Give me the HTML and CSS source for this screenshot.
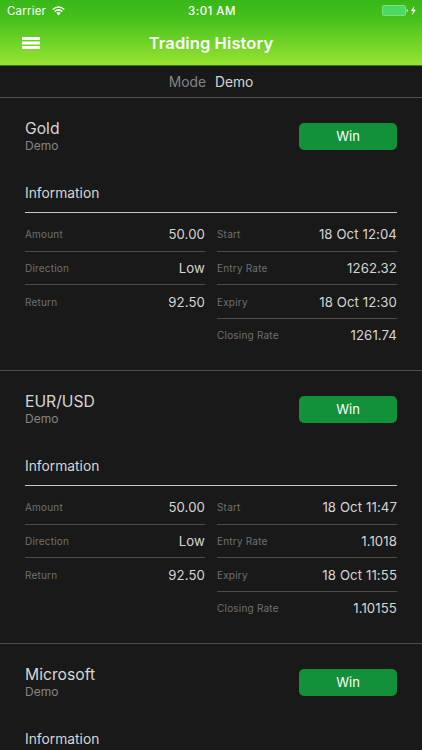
FILE: index.html
```html
<!DOCTYPE html>
<html lang="en">
<head>
<meta charset="utf-8">
<title>Trading History</title>
<link rel="stylesheet" href="styles.css">
</head>
<body>
<header class="header">
  <div class="status">
    <div class="carrier"><span>Carrier</span>
      <svg class="wifi" width="13" height="10" viewBox="0 0 13 10" fill="none" stroke="#fff" stroke-width="1.5"><path d="M.7 3.5Q6.5-1.6 12.3 3.5M2.7 5.5Q6.5 2.2 10.3 5.5"/><path d="M4.3 7Q6.5 5.2 8.7 7L6.5 9.4Z" fill="#fff" stroke="none"/></svg>
    </div>
    <div class="time">3:01 AM</div>
    <svg class="battery" width="35" height="12" viewBox="0 0 35 12"><rect x=".5" y=".5" width="23" height="10" rx="1.5" fill="#4cd964" stroke="#83dc78"/><path d="M24.5 3.7Q26 4.2 26 5.5T24.5 7.4Z" fill="#b8efa8"/><path d="M32.3 1L28.8 6.1H31L29.8 10.2L34 4.7H31.5Z" fill="#fff"/></svg>
  </div>
  <div class="nav">
    <svg class="menu" width="18" height="12" viewBox="0 0 18 12" fill="#fff"><path d="M0 0H18V3H0ZM0 4.5H18V7.5H0ZM0 9H18V12H0Z"/></svg>
    <h1>Trading History</h1>
  </div>
</header>
<div class="mode"><span class="mode-label">Mode</span><span>Demo</span></div>
<main>
  <section class="trade">
    <div class="trade-head"><div><h2>Gold</h2><p>Demo</p></div><div class="result">Win</div></div>
    <h3>Information</h3>
    <div class="columns">
      <dl><div><dt>Amount</dt><dd>50.00</dd></div><div><dt>Direction</dt><dd>Low</dd></div><div><dt>Return</dt><dd>92.50</dd></div></dl>
      <dl><div><dt>Start</dt><dd>18 Oct 12:04</dd></div><div><dt>Entry Rate</dt><dd>1262.32</dd></div><div><dt>Expiry</dt><dd>18 Oct 12:30</dd></div><div><dt>Closing Rate</dt><dd>1261.74</dd></div></dl>
    </div>
  </section>
  <section class="trade">
    <div class="trade-head"><div><h2>EUR/USD</h2><p>Demo</p></div><div class="result">Win</div></div>
    <h3>Information</h3>
    <div class="columns">
      <dl><div><dt>Amount</dt><dd>50.00</dd></div><div><dt>Direction</dt><dd>Low</dd></div><div><dt>Return</dt><dd>92.50</dd></div></dl>
      <dl><div><dt>Start</dt><dd>18 Oct 11:47</dd></div><div><dt>Entry Rate</dt><dd>1.1018</dd></div><div><dt>Expiry</dt><dd>18 Oct 11:55</dd></div><div><dt>Closing Rate</dt><dd>1.10155</dd></div></dl>
    </div>
  </section>
  <section class="trade partial">
    <div class="trade-head"><div><h2>Microsoft</h2><p>Demo</p></div><div class="result">Win</div></div>
    <h3>Information</h3>
  </section>
</main>
</body>
</html>
```
FILE: styles.css
```css
* { box-sizing: border-box; margin: 0; padding: 0; }
body {
  height: 750px;
  display: flex;
  flex-direction: column;
  overflow: hidden;
  background: #191919;
  color: #d6d6d6;
  font-family: Inter, "Liberation Sans", sans-serif;
}
.header {
  flex: none;
  height: 66px;
  color: #fff;
  background: linear-gradient(#38b818, #45c01c 28%, #98e432);
  border-bottom: 1px solid #43751f;
}
.status {
  height: 22px;
  padding: 0 5px 0 7px;
  display: grid;
  grid-template-columns: 1fr auto 1fr;
  align-items: center;
  font-size: 11.5px;
  line-height: 22px;
}
.carrier { display: flex; align-items: center; gap: 6px; letter-spacing: .2px; }
.time { font-weight: 500; letter-spacing: .45px; }
.battery { justify-self: end; }
.nav {
  height: 42px;
  display: grid;
  grid-template-columns: 40px 1fr 40px;
  align-items: center;
  padding: 0 22px;
}
h1 { text-align: center; font-size: 16.5px; font-weight: 600; line-height: 22px; letter-spacing: .1px; white-space: nowrap; }
.mode {
  flex: none;
  height: 32px;
  display: flex;
  justify-content: center;
  gap: 9px;
  border-bottom: 1px solid #4c4c4c;
  font-size: 13.8px;
  line-height: 32px;
}
.mode-label { color: #858585; }
.trade { height: 273px; padding: 20px 25px 0; border-bottom: 1px solid #4c4c4c; }
.trade-head { height: 60px; display: flex; justify-content: space-between; }
h2 { font-size: 15.7px; font-weight: 400; line-height: 22px; }
p { font-size: 12px; line-height: 12px; color: #858585; }
.result {
  width: 98px;
  height: 27px;
  margin-top: 5px;
  border-radius: 5px;
  background: #12903a;
  color: #fff;
  font-size: 13px;
  line-height: 27px;
  text-align: center;
}
h3 { height: 35px; padding-top: 5px; border-bottom: 1px solid #c4c8c4; font-size: 13.8px; font-weight: 400; line-height: 20px; }
.partial { height: 106px; border-bottom: 0; }
.partial h3 { height: 26px; border-bottom: 0; }
.columns { display: grid; grid-template-columns: 180px 180px; gap: 12px; padding-top: 5px; }
dl div { height: 33.67px; display: flex; justify-content: space-between; align-items: center; border-bottom: 1px solid #4c4c4c; }
dl div:last-child { border-bottom-color: transparent; }
dt { font-size: 10px; color: #707070; letter-spacing: .2px; }
dd { font-size: 13.2px; letter-spacing: .1px; }
```
